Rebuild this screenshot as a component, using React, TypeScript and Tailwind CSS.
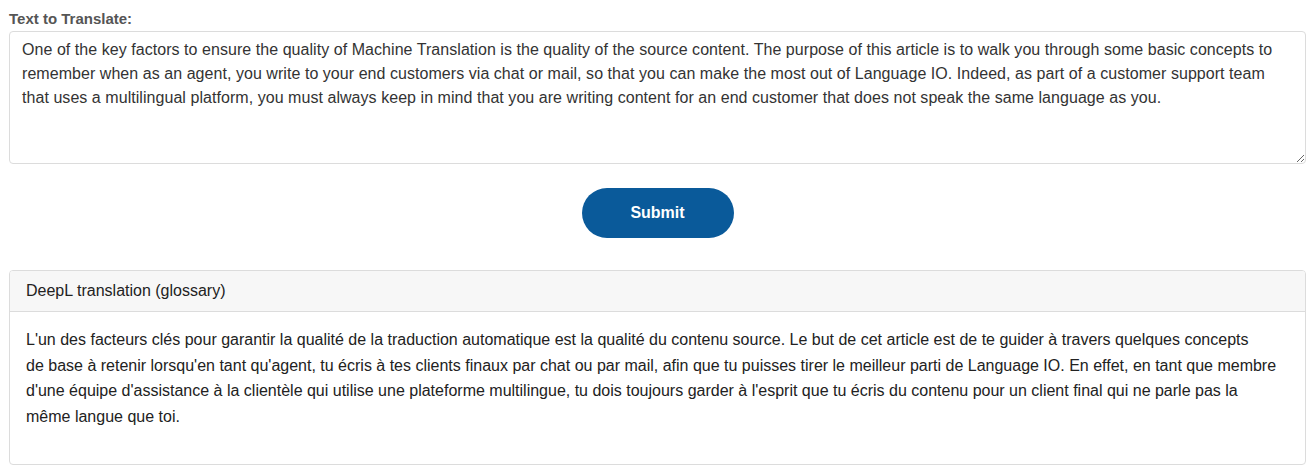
import React from "react";

const sourceText =
    "One of the key factors to ensure the quality of Machine Translation is the quality of the source content. The purpose of this article is to walk you through some basic concepts to remember when as an agent, you write to your end customers via chat or mail, so that you can make the most out of Language IO. Indeed, as part of a customer support team that uses a multilingual platform, you must always keep in mind that you are writing content for an end customer that does not speak the same language as you.";

// translated output, kept in the lines the panel shows
const translatedLines = [
    "L'un des facteurs clés pour garantir la qualité de la traduction automatique est la qualité du contenu source. Le but de cet article est de te guider à travers quelques concepts",
    "de base à retenir lorsqu'en tant qu'agent, tu écris à tes clients finaux par chat ou par mail, afin que tu puisses tirer le meilleur parti de Language IO. En effet, en tant que membre",
    "d'une équipe d'assistance à la clientèle qui utilise une plateforme multilingue, tu dois toujours garder à l'esprit que tu écris du contenu pour un client final qui ne parle pas la",
    "même langue que toi.",
];

const App = () => {
    return (
        <div className="w-[1315px] h-[471px] bg-white px-[9px] pt-[9px] font-['Liberation_Sans',Arial,sans-serif] text-[#333]">
            {/* source text */}
            <label className="block text-[15px] font-bold text-[#555] leading-[20px] mb-[2px]">
                Text to Translate:
            </label>
            <textarea
                defaultValue={sourceText}
                className="block w-full h-[133px] resize-y rounded-[4px] border border-[#dcdcdc] pl-[12px] pr-[16px] pt-[6px] text-[16px] leading-[23.8px] tracking-[0.05px] text-[#333] outline-none"
            />

            {/* submit */}
            <div className="flex justify-center mt-[24px]">
                <button className="w-[152px] h-[50px] rounded-full bg-[#0a5a9a] text-white text-[16px] font-bold">
                    Submit
                </button>
            </div>

            {/* translation card */}
            <div className="mt-[32px] rounded-[4px] border border-[#dcdcdc] overflow-hidden">
                <div className="h-[41px] bg-[#f7f7f7] border-b border-[#dcdcdc] px-[16px] flex items-center text-[16px] text-[#222]">
                    DeepL translation (glossary)
                </div>
                <div className="h-[152px] px-[16px] pt-[15px] text-[16px] leading-[25.5px] text-[#222]">
                    {translatedLines.map((line) => (
                        <div key={line} className="whitespace-nowrap">
                            {line}
                        </div>
                    ))}
                </div>
            </div>
        </div>
    );
};

export default App;
